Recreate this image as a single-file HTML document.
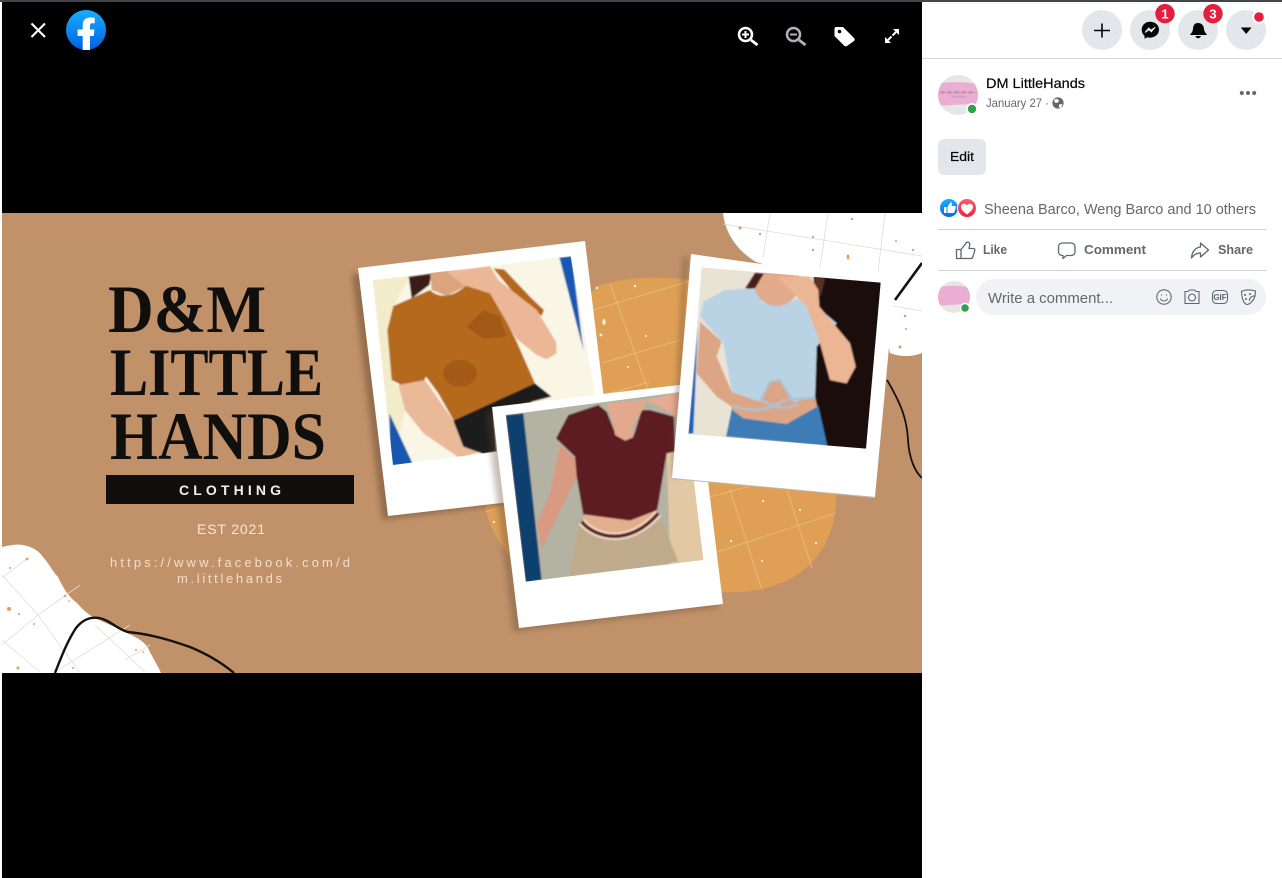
<!DOCTYPE html>
<html><head><meta charset="utf-8"><title>DM LittleHands</title>
<style>html,body{margin:0;padding:0;background:#fff;overflow:hidden}svg{display:block}
.s{font-family:"Liberation Sans",sans-serif}.t{font-family:"Liberation Serif",serif;font-weight:700;fill:#100f0d}</style></head>
<body>
<svg width="1282" height="878" viewBox="0 0 1282 878" xmlns="http://www.w3.org/2000/svg" class="s">
<defs>
<linearGradient id="fb" x1="0" y1="0" x2="0" y2="1"><stop offset="0" stop-color="#19aefe"/><stop offset="1" stop-color="#0161e0"/></linearGradient>
<linearGradient id="lk" x1="0" y1="0" x2="0" y2="1"><stop offset="0" stop-color="#18aefe"/><stop offset="1" stop-color="#0a68e8"/></linearGradient>
<linearGradient id="lv" x1="0" y1="0" x2="0" y2="1"><stop offset="0" stop-color="#ff5b6c"/><stop offset="1" stop-color="#e8243c"/></linearGradient>
<clipPath id="img"><rect x="2" y="213" width="920" height="460"/></clipPath>
<clipPath id="p1"><polygon points="68,150 662,78 759,624 129,705"/></clipPath>
<clipPath id="p2"><polygon points="107,105 640,35 700,540 167,605"/></clipPath>
<clipPath id="p3"><polygon points="125,172 662,218 618,716 85,672"/></clipPath>
<clipPath id="a1"><circle cx="958" cy="95" r="20"/></clipPath>
<clipPath id="a2"><circle cx="954" cy="297" r="16"/></clipPath>
<filter id="b1" x="-20%" y="-20%" width="140%" height="140%"><feGaussianBlur stdDeviation="3"/></filter>
<filter id="b2" x="-5%" y="-5%" width="110%" height="110%"><feGaussianBlur stdDeviation="2"/></filter>
<filter id="b3" x="-10%" y="-10%" width="120%" height="120%"><feGaussianBlur stdDeviation=".7"/></filter>
</defs>
<rect width="1282" height="878" fill="#fff"/>
<rect x="2" y="0" width="920" height="878" fill="#000"/>
<rect width="1282" height="2" fill="#44454a"/>

<g clip-path="url(#img)">
<rect x="2" y="213" width="920" height="460" fill="#c1926a"/>
<!-- top right white blob -->
<path d="M723,213C725,232 736,250 756,262L880,300L890,353C900,357 912,357 922,353V213Z" fill="#fff"/>
<g stroke="#dddbd6" stroke-width=".8" fill="none">
<path d="M723,224L922,256"/><path d="M893,306L922,311"/><path d="M770,213L763,258"/><path d="M828,213L820,268"/><path d="M885,213L878,272"/>
</g>
<g fill="#dd9f5c"><circle cx="740" cy="228" r="1.5"/><circle cx="760" cy="234" r="1.2"/><circle cx="813" cy="237" r="1.1"/><circle cx="813" cy="250" r="1.2"/><circle cx="852" cy="219" r="1.2"/><ellipse cx="848" cy="257" rx="1.3" ry="2.6"/><circle cx="896" cy="241" r="1"/><circle cx="913" cy="250" r="1.1"/><circle cx="905" cy="316" r="1.3"/><circle cx="900" cy="347" r="1.5"/><circle cx="906" cy="329" r="1"/></g>
<path d="M895,300L922,263" stroke="#141210" stroke-width="2.6" fill="none"/>
<path d="M887,380C900,402 907,418 908,440C909,458 915,472 922,478" stroke="#141210" stroke-width="1.8" fill="none"/>

<!-- orange tile blob -->
<path d="M595,287C620,278 650,275 690,280L836,490C838,530 822,560 792,578C765,592 735,595 700,590L510,556C497,542 488,522 485,505Z" fill="#dfa056"/>
<g stroke="#e9bd87" stroke-width=".8" fill="none">
<path d="M610,283L650,395"/><path d="M593,310L700,278"/><path d="M602,363L680,340"/><path d="M603,395L650,382"/>
<path d="M485,512L505,506"/><path d="M710,497L750,486"/><path d="M717,552L836,513"/><path d="M730,490L762,590"/><path d="M787,490L812,568"/>
</g>
<g fill="#f8efe0"><circle cx="597" cy="288" r="1.2"/><circle cx="635" cy="286" r="1.2"/><ellipse cx="604" cy="322" rx="1.6" ry="3"/><circle cx="601" cy="335" r="1.4"/><circle cx="646" cy="336" r="1"/><circle cx="628" cy="367" r="1"/><circle cx="494" cy="522" r="1.1"/><circle cx="763" cy="501" r="1.1"/><circle cx="800" cy="510" r="1.1"/><circle cx="816" cy="543" r="1.1"/><circle cx="731" cy="541" r="1.1"/><circle cx="762" cy="561" r="1"/></g>

<!-- left texts -->
<text class="t" x="108" y="332" font-size="68" textLength="158" lengthAdjust="spacingAndGlyphs">D&amp;M</text>
<text class="t" x="110" y="395" font-size="68" textLength="213" lengthAdjust="spacingAndGlyphs">LITTLE</text>
<text class="t" x="110" y="459" font-size="68" textLength="216" lengthAdjust="spacingAndGlyphs">HANDS</text>
<rect x="106" y="475" width="248" height="29" fill="#100f0d"/>
<text x="179" y="495" font-size="14" font-weight="700" fill="#f2efe9" textLength="102">CLOTHING</text>
<text x="197" y="534" font-size="14" fill="#f3e8da" textLength="68">EST 2021</text>
<text x="110" y="567" font-size="13" fill="#f0dfcd" textLength="240">https://www.facebook.com/d</text>
<text x="177" y="583" font-size="13" fill="#f0dfcd" textLength="105">m.littlehands</text>

<!-- bottom left white blob -->
<path d="M2,547C10,545 18,544 23,545C33,547 39,551 43,557C50,565 53,572 58,577C64,590 70,598 77,603C83,610 88,614 93,617C105,623 118,628 127,633C138,638 146,642 150,652C154,660 158,666 161,673H2Z" fill="#fff"/>
<g stroke="#dfddd9" stroke-width=".8" fill="none">
<path d="M2,578L28,558"/><path d="M2,575L38,615L80,673"/><path d="M38,615L80,585"/><path d="M2,645L38,615"/><path d="M55,672L130,625"/><path d="M2,640L40,672"/><path d="M95,625L145,672"/><path d="M125,660L150,645"/>
</g>
<g fill="#dd9f5c"><circle cx="27" cy="559" r="1.4"/><circle cx="10" cy="568" r="1"/><circle cx="65" cy="596" r="1.2"/><circle cx="69" cy="601" r=".9"/><circle cx="19" cy="614" r="1"/><circle cx="9" cy="609" r="2"/><circle cx="34" cy="624" r="1"/><circle cx="73" cy="668" r="1"/><circle cx="18" cy="668" r="1.5"/><circle cx="136" cy="650" r="1"/><circle cx="143" cy="652" r=".9"/></g>
<path d="M55,673C62,655 68,640 76,628C84,618 92,617 99,618C110,620 118,630 128,632C150,634 170,640 190,647C207,654 222,663 234,673" stroke="#141210" stroke-width="2.4" fill="none"/>

<!-- Polaroid 1 -->
<polygon points="352,274 580,247 610,492 382,520" fill="#6e4f36" opacity=".55" filter="url(#b1)"/>
<polygon points="358,268 585,241 615,490 388,516" fill="#fff"/>
<g transform="translate(350 230) scale(.33333)"><g clip-path="url(#p1)" filter="url(#b2)">
<rect x="0" y="0" width="800" height="750" fill="#f9f6e6"/>
<polygon points="68,150 178,140 130,230 112,300 125,450 145,470 165,540 129,705" fill="#f3ecca"/>
<polygon points="628,82 665,78 700,360" fill="#1559b4"/>
<polygon points="118,550 190,705 120,710" fill="#1859b0"/>
<polygon points="176,140 245,130 238,165 185,205" fill="#3b1b18"/>
<polygon points="240,125 350,118 345,170 290,198 245,180" fill="#dba47e"/>
<path d="M430,115L462,118L545,205L582,240L575,258L500,200Z" fill="#b5681d"/>
<path d="M130,228L240,180C265,205 310,205 355,160L420,175L500,335L555,460L545,520L410,570L310,570L265,490L228,440L215,465L160,468L125,450L112,300Z" fill="#b5691c"/>
<path d="M350,290L400,240L450,260L470,320L400,325Z" fill="#a25914"/>
<ellipse cx="330" cy="430" rx="50" ry="40" fill="#9c5513" opacity=".75"/>
<path d="M145,465L225,450L310,572L390,665L330,685L220,610L165,540Z" fill="#e9b998"/>
<path d="M290,125L420,108L445,150L560,240L618,335L620,370L590,388L560,375L498,325L420,190L340,165Z" fill="#ecb796"/>
<path d="M310,572L555,460L605,500L430,545L440,665L400,672L340,650Z" fill="#1d1c1a"/>
</g></g>

<!-- Polaroid 2 -->
<polygon points="486,412 690,388 718,608 513,632" fill="#5e4530" opacity=".35" filter="url(#b1)"/>
<polygon points="492,407 696,383 723,604 519,628" fill="#fff"/>
<g transform="translate(470 380) scale(.33333)"><g clip-path="url(#p2)" filter="url(#b2)">
<rect x="0" y="0" width="760" height="650" fill="#b4b2a2"/>
<polygon points="590,190 690,180 710,550 600,560" fill="#e3c8a4"/>
<polygon points="107,105 160,100 215,600 167,610" fill="#0e3f6e"/>
<path d="M270,195L315,235L322,290L280,370L215,510L200,430L240,340Z" fill="#d89a82"/>
<path d="M525,60L625,40L625,115L590,90Z" fill="#e6ab90"/>
<path d="M295,105L385,75L410,95L438,165L468,182L492,165L515,90L540,90L612,110L615,215L590,220L565,370L560,395L480,422L340,405L320,290L315,230L258,175Z" fill="#5b1a21"/>
<path d="M410,70L530,60L515,95L485,140L490,172L465,182L435,165L430,130Z" fill="#e2a98e"/>
<path d="M342,403L480,422L562,390L562,418L470,465L370,450L335,430Z" fill="#e3ae90"/>
<path d="M325,440L440,485L575,420L625,545L310,590L298,588Z" fill="#bfab8c"/>
<path d="M335,425C375,475 480,500 565,400" stroke="#eee4c6" stroke-width="22" fill="none"/>
<path d="M335,425C375,475 480,500 565,400" stroke="#611d28" stroke-width="11" fill="none"/>
</g></g>

<!-- Polaroid 3 -->
<polygon points="683,258 688,256 680,476 672,478" fill="#5e4530" opacity=".4" filter="url(#b1)"/>
<polygon points="691,254 895,283 875,497 672,478" fill="#fff"/>
<polygon points="672,478 875,497 875,498 672,479" fill="#bdbab5"/>
<g transform="translate(660 210) scale(.33333)"><g clip-path="url(#p3)" filter="url(#b2)">
<rect x="60" y="150" width="640" height="600" fill="#e9e3d6"/>
<polygon points="460,190 700,215 640,730 490,710 465,560 470,400" fill="#1c0e0e"/>
<polygon points="114,350 100,670 84,672" fill="#1a62bd"/>
<path d="M255,235L285,188L318,190L300,240Z" fill="#4b1d1a"/>
<path d="M465,200L495,205L482,260L462,240Z" fill="#5a3024"/>
<path d="M120,335L185,395L170,440L215,545L215,590L170,560L110,490Z" fill="#dca685"/>
<path d="M212,545L300,575L330,515L360,510L400,575L465,560L474,600L380,642L250,625L215,600Z" fill="#dca585"/>
<path d="M198,680L215,598L250,625L380,642L475,588L502,708Z" fill="#3d7cb4"/>
<path d="M195,240L285,235L310,280L400,272L430,255L530,340L470,410L465,560L400,575L360,510L330,515L300,575L215,545L190,400L120,320L130,275Z" fill="#bad3e4"/>
<path d="M285,235C295,290 370,310 410,255L420,190L315,185Z" fill="#e0aa8b"/>
<path d="M350,200L450,200L475,240L478,290L570,400L587,470L560,520L510,510L480,400L440,290L400,250Z" fill="#ecb694"/>
<path d="M218,585C270,610 330,600 365,575C390,560 430,570 465,562M300,565C330,590 380,605 415,580" stroke="#a9c2d6" stroke-width="7" fill="none"/>
<path d="M300,575L330,515L360,510L400,575" stroke="#a9c2d6" stroke-width="6" fill="none"/>
</g></g>
</g>

<!-- top left icons -->
<path d="M31.5,23.5L45,37M45,23.5L31.5,37" stroke="#fff" stroke-width="2.1" fill="none"/>
<circle cx="86" cy="30" r="20" fill="url(#fb)"/>
<path d="M82.7,50V36H77.6V29.5H82.7V25.500C82.7,20.300 85.500,17.500 90.200,17.500C92,17.500 93.600,17.700 94.700,18V23.300H91.800C90.300,23.300 90,24.500 90,26.300V29.500H94.500L93.700,36H90V50Z" fill="#fff"/>

<!-- image controls -->
<g fill="none" stroke="#fff"><circle cx="745.500" cy="34.500" r="6.500" stroke-width="2.500"/><path d="M751,40L757.500,45" stroke-width="2.800"/><path d="M742,34.500H749M745.500,31V38" stroke-width="2"/></g>
<g fill="none" stroke="#b0b3b8"><circle cx="793.500" cy="34.500" r="6.500" stroke-width="2.500"/><path d="M799,40L805.500,45" stroke-width="2.800"/><path d="M790,34.500H797" stroke-width="2"/></g>
<path d="M836,27H843L854,38C855,39 855,40 854,41L847,46C846,46.500 845,46.500 844,45.500L834.500,36V29C834.500,28 835,27 836,27Z" fill="#fff"/>
<circle cx="839.500" cy="31.500" r="1.800" fill="#000"/>
<path d="M893,29H899V35ZM885,37L891,43H885Z" fill="#fff"/>
<path d="M896,32L892.500,35.500M888,40L891.500,36.500" stroke="#fff" stroke-width="2"/>

<!-- sidebar header -->
<rect x="922" y="58" width="360" height="1" fill="#d5d6d9"/>
<g fill="#e4e6eb"><circle cx="1102" cy="30" r="20"/><circle cx="1150" cy="30" r="20"/><circle cx="1198" cy="30" r="20"/><circle cx="1246" cy="30" r="20"/></g>
<path d="M1094,30.500H1110M1102,23.500V37.500" stroke="#050505" stroke-width="1.600"/>
<path d="M1150,21.800C1145.200,21.800 1141.700,25.300 1141.700,29.800C1141.700,32.300 1142.700,34.400 1144.500,35.800V38.800L1147.300,37.200C1148.200,37.500 1149,37.600 1150,37.600C1155,37.600 1159,34.200 1159,29.600C1159,25.200 1155,21.800 1150,21.800Z" fill="#050505"/>
<path d="M1145,32.500L1148.800,28L1151,30.200L1155.200,27.300L1151.300,31.800L1149,29.800Z" fill="#e4e6eb" stroke="#e4e6eb" stroke-width="1"/>
<path d="M1198,23C1202,23 1203.800,26 1204,29C1204.200,31.500 1206,33.500 1207,35H1190C1191,33.500 1192.800,31.500 1193,29C1193.200,26 1194,23 1198,23Z" fill="#050505"/>
<path d="M1195.500,36H1201C1200.500,37.600 1199.300,38.200 1198,38.200C1196.700,38.200 1196,37.600 1195.500,36Z" fill="#050505"/>
<path d="M1240.800,27.500H1251.600L1246.200,34Z" fill="#050505"/>
<circle cx="1165" cy="13.700" r="9.700" fill="#e41e3f"/><text x="1165" y="18.700" font-size="13" font-weight="700" fill="#fff" text-anchor="middle">1</text>
<circle cx="1213" cy="13.700" r="9.700" fill="#e41e3f"/><text x="1213" y="18.700" font-size="13" font-weight="700" fill="#fff" text-anchor="middle">3</text>
<circle cx="1259" cy="17" r="6.800" fill="#fff"/><circle cx="1259" cy="17" r="4.800" fill="#e41e3f"/>

<!-- post header -->
<circle cx="958" cy="95" r="20" fill="#e6e6e4"/>
<g clip-path="url(#a1)">
<path d="M936,84C950,81 966,82 980,84L980,106C964,102 950,107 936,105Z" fill="#eaaed3"/>
<g filter="url(#b3)"><path d="M940,92H976" stroke="#6e4a64" stroke-width="1.400" stroke-dasharray="5 2" opacity=".65"/><path d="M951,97H966" stroke="#6e4a64" stroke-width=".8" opacity=".5"/></g>
</g>
<circle cx="972" cy="109" r="6" fill="#fff"/><circle cx="972" cy="109" r="4.200" fill="#31a24c"/>
<text x="986" y="88" font-size="14" fill="#050505" textLength="99" lengthAdjust="spacingAndGlyphs" stroke="#050505" stroke-width=".2">DM LittleHands</text>
<text x="986" y="107" font-size="12" fill="#65676b" textLength="63" lengthAdjust="spacingAndGlyphs">January 27 ·</text>
<circle cx="1058" cy="103" r="5.600" fill="#65676b"/>
<path d="M1054,99.500L1058,99L1059,101.500L1056.500,103L1054.800,102.500ZM1059,104.500L1062.500,104L1061,108L1059,107.500Z" fill="#fff"/>
<g fill="#65676b"><circle cx="1241.800" cy="93" r="2"/><circle cx="1248" cy="93" r="2"/><circle cx="1254.200" cy="93" r="2"/></g>
<rect x="938" y="139" width="48" height="36" rx="6" fill="#e4e6eb"/>
<text x="950" y="161" font-size="13" fill="#050505" textLength="24" lengthAdjust="spacingAndGlyphs" stroke="#050505" stroke-width=".2">Edit</text>

<!-- reactions -->
<circle cx="949" cy="208" r="9" fill="url(#lk)"/>
<path d="M944,207H946.500V213H944ZM947.500,207L950,203C950.500,201.800 952.500,202.300 952,204L951.500,206H954.500C955.500,206 956,207 955.700,207.800L954.500,212C954.300,212.800 953.700,213 953,213H947.500Z" fill="#fff"/>
<circle cx="967" cy="208" r="10" fill="#fff"/><circle cx="967" cy="208" r="9" fill="url(#lv)"/>
<path d="M967,214.500C963,211.500 961,209.500 961,206.800C961,203.500 965.500,202.500 967,205.500C968.500,202.500 973,203.500 973,206.800C973,209.500 971,211.500 967,214.500Z" fill="#fff"/>
<text x="984" y="214" font-size="14.500" fill="#65676b" textLength="272" lengthAdjust="spacingAndGlyphs">Sheena Barco, Weng Barco and 10 others</text>
<rect x="938" y="229" width="328" height="1" fill="#ced0d4"/>
<rect x="938" y="270" width="328" height="1" fill="#ced0d4"/>

<!-- actions -->
<g fill="none" stroke="#606770" stroke-width="1.300" stroke-linejoin="round">
<path d="M956.500,249.500H961V258.500H956.500ZM961,249.500L965.500,244C966.300,241.500 969.500,241.500 969.800,244.500L969,248.500H973.500C974.500,248.500 975,249.500 974.800,250.500L972.800,257C972.500,258 971.800,258.500 970.800,258.500H961"/>
<path d="M1058.500,247C1058.500,244.300 1060.300,243 1062.500,243H1071C1073.500,243 1075,244.500 1075,247V251.500C1075,254 1073.500,255.500 1071,255.500H1066.500L1063,258.500V255.500H1062.500C1060,255.500 1058.500,254 1058.500,251.500Z"/>
<path d="M1200.500,243L1208.500,250L1200.500,257V253C1196.500,253 1194,254.500 1191.500,258C1192,252 1195,247.500 1200.500,247Z"/>
</g>
<g font-size="13" fill="#65676b" font-weight="700">
<text x="983" y="254" textLength="24" lengthAdjust="spacingAndGlyphs">Like</text>
<text x="1084" y="254" textLength="62" lengthAdjust="spacingAndGlyphs">Comment</text>
<text x="1218" y="254" textLength="35" lengthAdjust="spacingAndGlyphs">Share</text>
</g>

<!-- comment box -->
<circle cx="954" cy="297" r="16" fill="#e6e6e4"/>
<g clip-path="url(#a2)">
<path d="M936,288C947,285 961,285 972,288L972,306C959,302 948,307 936,305Z" fill="#eaaed3"/>
<path d="M941,295H967" stroke="#6e4a64" stroke-width="1" stroke-dasharray="4 2" opacity=".6" filter="url(#b3)"/>
</g>
<circle cx="965" cy="308" r="5.300" fill="#fff"/><circle cx="965" cy="308" r="3.800" fill="#31a24c"/>
<rect x="976" y="279" width="290" height="36" rx="18" fill="#f0f2f5"/>
<text x="988" y="303" font-size="15" fill="#65676b" textLength="125" lengthAdjust="spacingAndGlyphs">Write a comment...</text>
<g fill="none" stroke="#606770" stroke-width="1.100">
<circle cx="1164" cy="297" r="7.200"/><path d="M1160.500,298.500C1161.500,301.800 1166.500,301.800 1167.500,298.500"/><path d="M1161.500,294.500V295.500M1166.500,294.500V295.500"/>
<path d="M1185,291.500H1188L1189.500,290H1194.500L1196,291.500H1199V303.500H1185Z"/><circle cx="1192" cy="297.500" r="3.500"/>
<rect x="1212.500" y="290.500" width="15" height="13" rx="4"/>
<path d="M1241.500,291.500C1245,289.500 1251,289.500 1255.500,291L1255,296C1254,300 1250,304.500 1247,304.500C1243.500,304 1241.500,297 1241.500,291.500ZM1255,296C1252,295.500 1249,298 1249.500,301"/>
</g>
<text x="1220" y="300" font-size="8" font-weight="700" fill="#606770" text-anchor="middle">GIF</text>
<g fill="#606770"><circle cx="1245" cy="295" r="1"/><circle cx="1250" cy="294" r="1"/><circle cx="1246" cy="299" r="1"/></g>
</svg>
</body></html>
